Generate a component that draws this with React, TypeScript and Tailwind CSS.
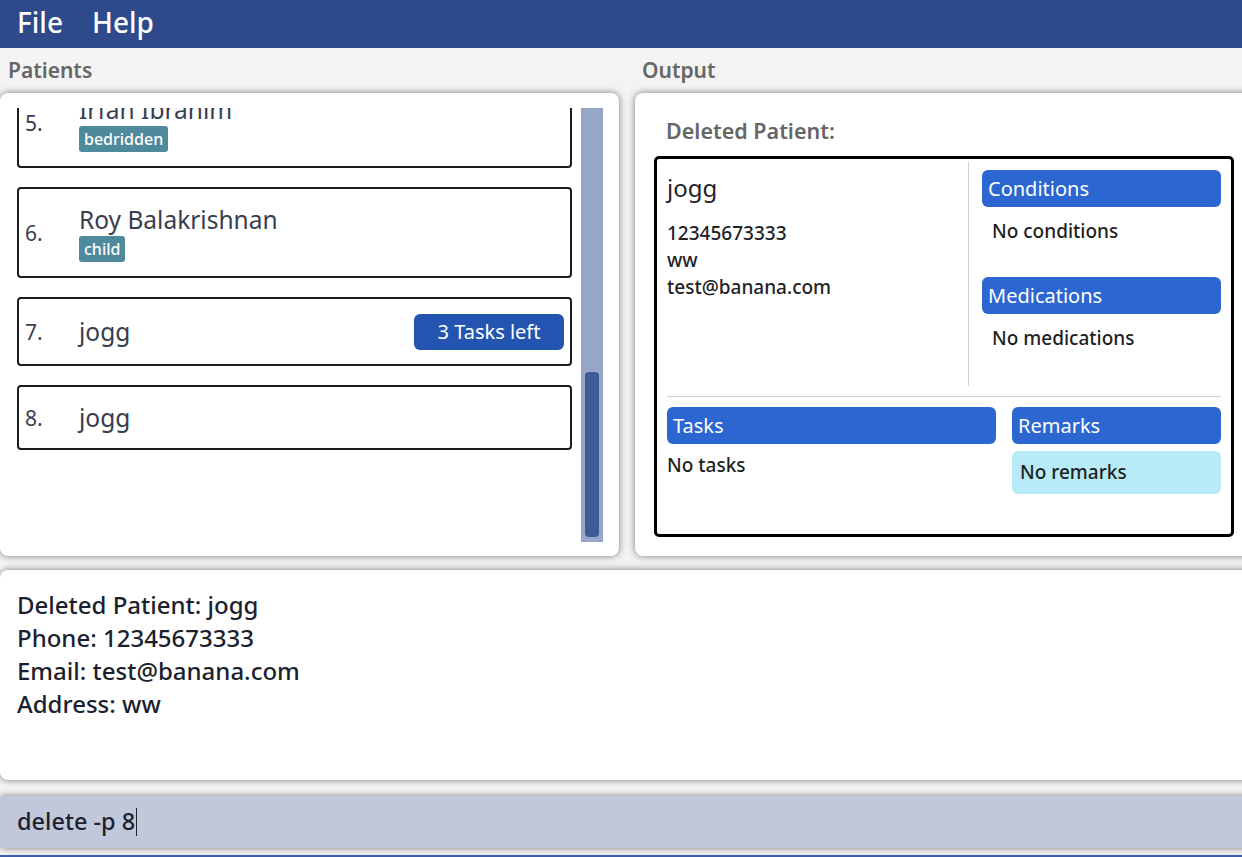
import React from "react";

type Patient = {
  index: number;
  name: string;
  tags?: string[];
  tasksLeft?: number;
};

const patients: Patient[] = [
  { index: 5, name: "Irfan Ibrahim", tags: ["bedridden"] },
  { index: 6, name: "Roy Balakrishnan", tags: ["child"] },
  { index: 7, name: "jogg", tasksLeft: 3 },
  { index: 8, name: "jogg" },
];

function PatientCard({ p }: { p: Patient }) {
  return (
    <div className="flex items-center rounded-[4px] border-2 border-[#1c1c1c] bg-white pl-[6px] pr-[6px] pt-[15px] pb-[14px]">
      <div className="w-[54px] shrink-0 text-[21px] leading-[32px] text-[#383d4f]">
        {p.index}.
      </div>
      <div className="flex-1">
        <div className="text-[24.5px] leading-[32px] text-[#383d4f]">{p.name}</div>
        {p.tags && (
          <div className="flex gap-1">
            {p.tags.map((t) => (
              <span
                key={t}
                className="rounded-[3px] bg-[#4f8a9c] px-[5px] text-[16px] font-medium leading-[26px] text-white"
              >
                {t}
              </span>
            ))}
          </div>
        )}
      </div>
      {p.tasksLeft !== undefined && (
        <span className="flex h-[36px] w-[150px] items-center justify-center rounded-[6px] bg-[#2355b0] text-[20px] text-white">
          {p.tasksLeft} Tasks left
        </span>
      )}
    </div>
  );
}

function SectionHeader({ children }: { children: React.ReactNode }) {
  return (
    <div className="flex h-[37px] items-center rounded-[6px] bg-[#2b66d1] pl-[6px] text-[20px] text-white">
      {children}
    </div>
  );
}

export default function App() {
  return (
    <div className="h-[857px] w-full overflow-hidden bg-[#f3f3f3] font-['Noto_Sans',sans-serif]">
      {/* Menu bar */}
      <div className="flex h-[48px] items-center gap-[29px] bg-[#2e4a8a] pb-[4px] pl-[17px] text-[28px] font-medium text-white">
        <span>File</span>
        <span>Help</span>
      </div>

      {/* Labels */}
      <div className="flex h-[45px] items-center gap-[16px] text-[21px] font-semibold text-[#666666]">
        <div className="w-[619px] pl-[8px]">Patients</div>
        <div className="pl-[7px]">Output</div>
      </div>

      {/* Main panels */}
      <div className="flex h-[463px] gap-[16px]">
        {/* Patient list */}
        <div className="flex w-[619px] shrink-0 gap-[9px] rounded-[8px] bg-white pt-[15px] pb-[14px] pl-[17px] pr-[16px] shadow-[0_0_7px_rgba(0,0,0,0.5)]">
          <div className="flex-1 overflow-hidden">
            <div className="-mt-[31px] flex flex-col gap-[19px]">
              {patients.map((p) => (
                <PatientCard key={p.index} p={p} />
              ))}
            </div>
          </div>
          <div className="flex w-[22px] shrink-0 flex-col justify-end bg-[#95a6c6] px-[4px] pb-[5px]">
            <div className="h-[165px] rounded-[4px] bg-[#3f5b96]" />
          </div>
        </div>

        {/* Output */}
        <div className="-mr-[20px] flex-1 rounded-[8px] bg-white pt-[24px] pl-[19px] shadow-[0_0_7px_rgba(0,0,0,0.5)]">
          <div className="ml-[12px] mb-[11px] text-[21.5px] font-semibold leading-[28px] text-[#666666]">
            Deleted Patient:
          </div>
          <div className="h-[381px] w-[580px] rounded-[5px] border-[3px] border-black px-[10px] pt-[3px]">
            <div className="flex h-[224px]">
              <div className="w-[301px] pt-[10px] text-[#222228]">
                <div className="text-[24px] leading-[32px]">jogg</div>
                <div className="mt-[16px] text-[19px] font-medium leading-[27px]">
                  <div>12345673333</div>
                  <div>ww</div>
                  <div>test@banana.com</div>
                </div>
              </div>
              <div className="w-px bg-[#d0d0d0]" />
              <div className="flex-1 pl-[13px] pt-[8px]">
                <SectionHeader>Conditions</SectionHeader>
                <div className="h-[70px] pl-[10px] pt-[11px] text-[19px] font-medium leading-[26px] text-[#1e1e1e]">
                  No conditions
                </div>
                <SectionHeader>Medications</SectionHeader>
                <div className="pl-[10px] pt-[11px] text-[19px] font-medium leading-[26px] text-[#1e1e1e]">
                  No medications
                </div>
              </div>
            </div>
            <div className="mt-[10px] h-px bg-[#d0d0d0]" />
            <div className="mt-[10px] flex gap-[16px]">
              <div className="w-[329px]">
                <SectionHeader>Tasks</SectionHeader>
                <div className="pt-[8px] text-[19px] font-medium leading-[26px] text-[#1e1e1e]">
                  No tasks
                </div>
              </div>
              <div className="flex-1">
                <SectionHeader>Remarks</SectionHeader>
                <div className="mt-[7px] flex h-[43px] items-center rounded-[6px] bg-[#b6ebf7] pl-[8px] text-[19px] font-medium text-[#1e1e1e]">
                  No remarks
                </div>
              </div>
            </div>
          </div>
        </div>
      </div>

      {/* Result display */}
      <div className="-mr-[20px] mt-[14px] h-[210px] rounded-[8px] bg-white pl-[17px] pt-[18px] text-[24px] font-medium leading-[33px] text-[#1b1f2e] shadow-[0_0_7px_rgba(0,0,0,0.5)]">
        <div>Deleted Patient: jogg</div>
        <div>Phone: 12345673333</div>
        <div>Email: test@banana.com</div>
        <div>Address: ww</div>
      </div>

      {/* Command box */}
      <div className="-mr-[20px] mt-[16px] flex h-[52px] items-center rounded-[4px] bg-[#c0c8dc] pl-[17px] text-[23.5px] font-medium text-[#1f1f2f] shadow-[0_0_7px_rgba(0,0,0,0.5)]">
        <span>delete -p 8</span>
        <span className="ml-px inline-block h-[28px] w-px bg-[#222]" />
      </div>

      <div className="mt-[7px] h-[2px] bg-[#3b5ea6]" />
    </div>
  );
}
